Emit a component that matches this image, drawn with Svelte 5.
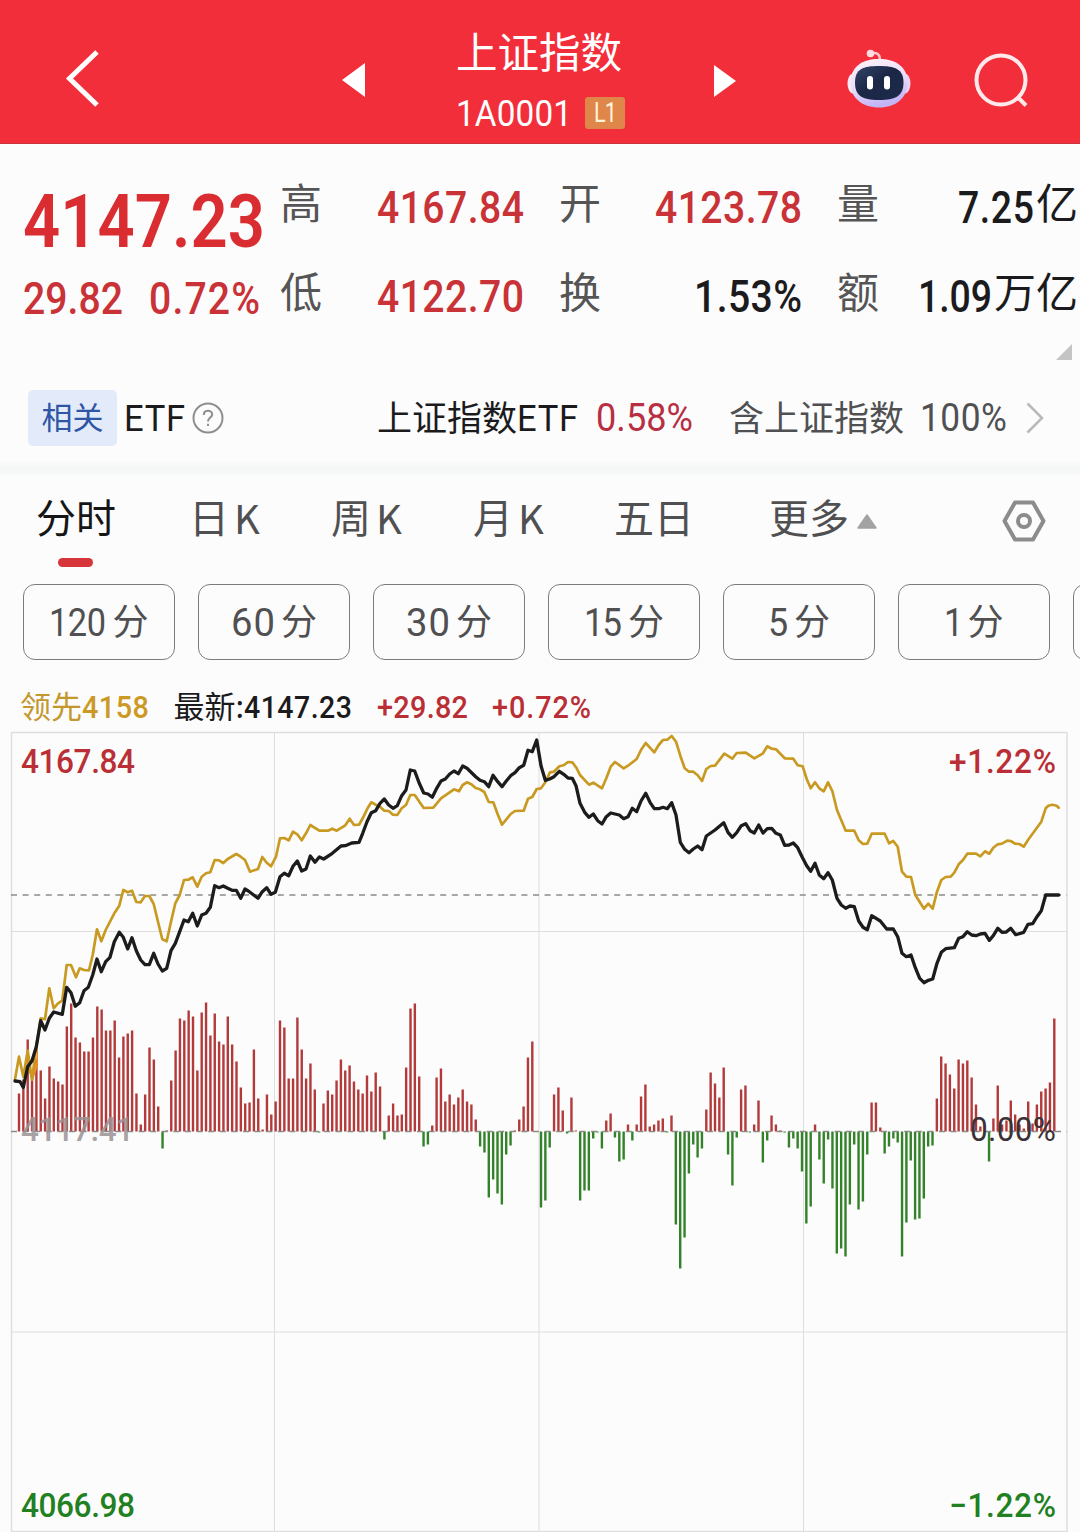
<script>
  const quotes = [
    { label: '高', num: '4167.84', w: 147, tone: 'up' },
    { label: '开', num: '4123.78', w: 147, tone: 'up' },
    { label: '量', num: '7.25', w: 76, unit: '亿', tone: 'ink' },
    { label: '低', num: '4122.70', w: 147, tone: 'up' },
    { label: '换', num: '1.53%', w: 108, tone: 'ink' },
    { label: '额', num: '1.09', w: 74, unit: '万亿', tone: 'ink' }
  ];

  const tabs = [
    { zh: '分时', active: true },
    { zh: '日', k: true },
    { zh: '周', k: true },
    { zh: '月', k: true },
    { zh: '五日' },
    { zh: '更多', more: true }
  ];

  const chips = [
    { n: '120', w: 57, sx: 0.88 },
    { n: '60', w: 44, sx: 0.98 },
    { n: '30', w: 44, sx: 0.98 },
    { n: '15', w: 38, sx: 0.9 },
    { n: '5', w: 20, sx: 0.92 },
    { n: '1', w: 17, sx: 0.88 }
  ];

  // Momentum bars, one per minute; positive above the zero line, negative below.
  const bars = [
    38, 52, 92, 52, 72, 61, 33, 65, 53, 50, 47, 105, 128, 94, 89, 80, 80, 94, 125, 122, 101, 101, 111, 74, 95, 98, 101, 38, 7, 37,
    84, 72, 25, -17, 1, 51, 81, 113, 111, 121, 115, 61, 119, 129, 96, 118, 90, 87, 115, 87, 70, 44, 28, 29, 82, 33, 2, 37, 17, 30, 111,
    104, 53, 53, 114, 82, 53, 68, 42, -1, 28, 41, 37, 51, 72, 61, 66, 50, 42, 38, 56, 40, 59, 45, -8, 16, 28, 16, 17, 64, 123,
    128, 55, -15, -13, 6, 54, 63, 30, 37, 27, 34, 42, 30, 27, 12, -15, -21, -66, -48, -62, -73, -23, -14, 1, 12, 25, 74, 90, 0,
    -76, -69, -16, 37, 44, 21, -2, 34, 1, -69, -59, -59, -7, -1, -17, 11, 18, -6, -30, -28, 7, -9, 7, 35, 47, 5, 7, 11, 13, -1,
    16, -93, -137, -106, -42, -13, -26, -17, 22, 59, 48, 34, 64, -23, -54, -6, 42, 46, -1, 7, 31, -31, -9, 16, 7, 1, -1, -16, -7, -17, -40, -92,
    -75, 7, -28, -52, -8, -57, -122, -117, -125, -73, -13, -78, -70, -23, 29, 29, 4, -22, -15, -7, -11, -125, -91, -29, -88, -87, -67, -15, -14, 33,
    75, 68, 57, 43, 72, 68, 71, 54, 27, 5, 1, -30, 13, 46, 7, 11, 31, 17, 7, 3, 30, 8, 27, 40, 43, 49, 113
  ];
  const zeroY = 1131.5;
  const barX = (i) => 19 + i * 4.35;

  // Each run holds an origin and its points in thirds of a pixel.
  const priceRuns = [
    [0, 880, '45,603 60,605 70,622 83,560 96,542 109,500 122,422 135,450 148,415 161,396 187,403 200,322 213,338 226,379 239,368 252,332 265,322 278,285 291,237 304,275 317,245 330,232 343,185 358,157 370,172 383,207 396,173 409,212 422,240 435,254 448,254 461,220 474,252 487,273 500,265 513,212 526,190 539,155 552,120 565,125 578,100 592,138 605,105 618,100 631,82'],
    [0, 725, '644,482 657,488 670,483 683,490 696,496 709,496 722,520 735,492 748,500 774,520 787,500 800,488 813,508 826,502'],
    [260, 725, '60,455 73,445 86,452 99,424 112,408 125,438 138,432 151,393 165,412 178,396 191,402 217,385 243,363 256,362 275,354 297,352 308,325 321,290 334,263 347,257 360,235 373,222 386,240 399,250 412,242 425,212 438,195 451,135 464,138 478,175 491,204 504,207 517,217 530,190 543,168 556,162 569,147 582,138 595,146 608,123 621,130 647,155 660,166 673,170 686,185 699,151 713,170 726,185 739,168 752,152 765,143 778,128 791,121 804,76 817,80'],
    [530, 725, '20,45 33,122 46,166 59,162 72,155 88,139 101,148 114,159 127,160 138,182 150,235 164,262 177,277 190,267 203,287 216,297 229,275 242,264 268,270 281,281 294,275 307,250 320,260 333,228 347,205 360,232 373,251 386,251 399,247 412,251 425,233 438,270 451,352 464,373 477,383 490,372 503,363 516,374 529,333 555,315 581,293 594,322 607,337 620,323 634,302 647,296 660,317 673,324 686,300 699,324 712,311 725,310 738,325 751,330 764,361 777,360 790,354 803,368'],
    [800, 725, '6,395 20,422 32,439 45,415 58,450 71,461 84,443 97,465 111,520 124,540 137,550 150,543 163,545 176,588 189,607 202,614 215,572 241,588 260,612 280,612 293,635 306,685 319,695 333,690 346,728 359,760 372,773 385,766 398,762 411,715 424,682 437,671 463,668 476,640 489,635 502,620 515,630 528,632 541,627 555,625 568,646 580,632 593,610 606,622 619,621 632,610 647,629 671,622 684,598 698,596 711,575 724,557 737,510 776,510']
  ];
  const leadRuns = [
    [0, 880, '45,598 57,530 70,590 83,512 96,600 109,500 122,415 135,418 148,325 161,385 174,370 187,362 200,255 213,255 228,292 239,265 252,270 267,271 278,225 291,148 304,184 317,150 343,100 358,77 370,30 383,37 396,32 409,66 422,67 435,48 448,48 461,72 474,125 487,178 500,184 513,125 526,70'],
    [0, 725, '539,510 552,465 565,464 578,457 592,485 605,455 618,445 631,442 644,405 657,406 670,414 683,402 709,387 722,395 735,405 750,440 774,432 787,396 800,413 813,424'],
    [260, 725, '48,395 60,340 73,339 86,346 99,320 112,328 125,346 138,325 151,300 178,317 204,317 217,311 230,317 256,301 269,281 282,300 297,299 308,280 321,253 334,232 347,239 360,245 373,257 386,258 399,269 412,270 425,250 438,240 451,210 464,210 491,249 520,248 543,220 582,193 597,199 608,180 621,172 634,178 647,189 660,193 673,201 686,231 700,232 713,268 726,299 752,267 765,258 791,257 804,221 817,216 830,192 843,190 856,172'],
    [530, 725, '60,142 72,140 88,124 101,121 114,111 127,112 140,130 150,150 177,179 190,173 216,190 229,160 242,125 255,111 281,130 294,122 320,102 333,75 347,54 373,82 386,60 399,45 412,44 425,33 438,50 451,92 464,130 477,140 490,140 503,151 516,168 529,132 542,123 555,122 583,86 607,101 620,84 647,83 673,100 699,85 712,64 725,71 738,73 764,100 790,101 803,121'],
    [800, 725, '8,124 20,162 32,190 45,172 58,190 71,199 84,172 97,198 111,255 137,317 163,317 176,346 189,357 202,356 215,326 254,326 267,355 280,348 293,365 306,440 319,455 333,456 346,510 372,551 385,536 398,551 411,500 424,465 437,456 452,455 463,443 476,418 489,405 502,386 528,386 541,394 555,379 568,386 580,368 593,358 606,356 622,347 632,348 645,356 658,357 671,365 684,345 724,290 737,250 745,242 757,239 770,242 776,248']
  ];
  const toPoints = (runs) =>
    runs
      .flatMap(([ox, oy, pts]) =>
        pts.split(' ').map((p) => {
          const [x, y] = p.split(',').map(Number);
          return `${(ox + x / 3).toFixed(1)},${(oy + y / 3).toFixed(1)}`;
        })
      )
      .join(' ');
  const price = toPoints(priceRuns);
  const lead = toPoints(leadRuns);

  const axis = [
    { t: '4167.84', x: 21, y: 773, w: 114, tone: 'crimson' },
    { t: '+1.22%', x: 949, y: 773, w: 107, tone: 'crimson' },
    { t: '4117.41', x: 21, y: 1141, w: 113, tone: 'mid' },
    { t: '0.00%', x: 970, y: 1141, w: 86, tone: 'zero' },
    { t: '4066.98', x: 21, y: 1517, w: 114, tone: 'green' },
    { t: '−1.22%', x: 949, y: 1517, w: 107, tone: 'green' }
  ];
</script>

<!-- Narrowed figures spaced out to a width; the box is as tall as the capitals. -->
{#snippet fit(text, w, size, cls, sx = 0.9)}
  <svg class="fit {cls}" width={w} height={Math.round(size * 0.711)}>
    <text y={Math.round(size * 0.711)} font-size={size} transform="scale({sx} 1)" textLength={w / sx}>{text}</text>
  </svg>
{/snippet}

<main>
  <header>
    <svg class="back" width="36" height="60" viewBox="0 0 36 60"><path d="M32 4 4.500 30.500 32 57" /></svg>
    <svg class="prev" width="24" height="36" viewBox="0 0 24 36"><path d="M0 18 23 1V35Z" /></svg>
    <div class="title">
      <h1>上证指数</h1>
      <div class="code">
        {@render fit('1A0001', 116, 37, 'white')}
        <span class="level">{@render fit('L1', 23, 27, 'cream', 0.8)}</span>
      </div>
    </div>
    <svg class="next" width="22" height="34" viewBox="0 0 22 34"><path d="M22 17 0 1V33Z" /></svg>
    <svg class="robot" width="64" height="62" viewBox="0 0 64 62">
      <defs>
        <linearGradient id="shell" x1="0" y1="0" x2="0.300" y2="1">
          <stop offset="0" stop-color="#fff3f8" /><stop offset="0.600" stop-color="#e9dcfa" /><stop offset="1" stop-color="#c3b4f6" />
        </linearGradient>
        <linearGradient id="visor" x1="0" y1="0" x2="1" y2="1">
          <stop offset="0" stop-color="#33456b" /><stop offset="0.450" stop-color="#1b2745" /><stop offset="1" stop-color="#1c2a4c" />
        </linearGradient>
      </defs>
      <path d="M24 5.500C30 4 33 6 33 12" fill="none" stroke="#ffc9d2" stroke-width="2.500" />
      <circle cx="23.500" cy="5.500" r="3.800" fill="#ffdbe2" />
      <ellipse cx="6" cy="35.500" rx="5.500" ry="10" fill="#fbeaf4" />
      <ellipse cx="58" cy="35.500" rx="5.500" ry="10" fill="#ecd2f0" />
      <path d="M32 11C49 11 60.500 19 60.500 34.500C60.500 50 49 59.500 32 59.500C15 59.500 3.500 50 3.500 34.500C3.500 19 15 11 32 11Z" fill="url(#shell)" />
      <path d="M32 18C48 18 56.500 21 56.500 34.500C56.500 47 50 52 32 52C14 52 8 47 8 34.500C8 21 16 18 32 18Z" fill="url(#visor)" />
      <rect x="20" y="28" width="6" height="13.500" rx="3" fill="#fff" />
      <rect x="37" y="28" width="6" height="13.500" rx="3" fill="#fff" />
    </svg>
    <svg class="search" width="56" height="56" viewBox="0 0 56 56"><circle cx="27" cy="27" r="24.500" /><path d="M43 43.500 52 52.500" /></svg>
  </header>

  <section class="quote">
    <div class="last">
      {@render fit('4147.23', 242, 74, 'up strong', 0.88)}
      <div class="change">
        {@render fit('29.82', 100, 43.5, 'up')}
        {@render fit('0.72%', 111, 43.5, 'up')}
      </div>
    </div>
    <div class="grid">
      {#each quotes as q}
        <div class="cell">
          <span class="label">{q.label}</span>
          <span class="value" class:mixed={q.unit}>{@render fit(q.num, q.w, 43.5, q.tone, q.unit ? 0.86 : 0.9)}{#if q.unit}<span class="unit">{q.unit}</span>{/if}</span>
        </div>
      {/each}
      <svg class="corner" width="16" height="16" viewBox="0 0 16 16"><path d="M16 0V16H0Z" /></svg>
    </div>
  </section>

  <section class="etf">
    <span class="tag"><span>相关</span></span>
    {@render fit('ETF', 61, 36, 'ink plain', 0.96)}
    <svg class="help" width="32" height="32" viewBox="0 0 32 32">
      <circle cx="16" cy="16" r="14.500" />
      <path d="M11.800 13C11.800 7.500 20.200 7.500 20.200 12.500C20.200 15.500 16 15.800 16 19.500" /><path d="M16 21.800V24" />
    </svg>
    <span class="name">上证指数</span>
    {@render fit('ETF', 61, 36, 'ink plain', 0.96)}
    <span class="pct">{@render fit('0.58%', 97, 38, 'rose plain', 0.95)}</span>
    <span class="holds">含上证指数</span>
    <span class="share">{@render fit('100%', 87, 38, 'grey plain', 0.93)}</span>
    <svg class="go" width="18" height="32" viewBox="0 0 18 32"><path d="M1.500 1.500 16 16 1.500 30.500" /></svg>
  </section>
  <div class="band"></div>

  <nav class="tabs">
    {#each tabs as t}
      <div class="tab" class:active={t.active}>
        <span>{t.zh}</span>
        {#if t.k}<span class="k">K</span>{/if}
        {#if t.more}<svg class="more" width="20" height="15" viewBox="0 0 20 15"><path d="M10 1 19 14H1Z" /></svg>{/if}
      </div>
    {/each}
    <svg class="gear" width="44" height="42" viewBox="0 0 44 42"><path d="M13 2.500H31L41.500 21 31 39.500H13L2.500 21Z" /><circle cx="22" cy="21" r="6" /></svg>
  </nav>

  <div class="chips">
    {#each chips as c}
      <button>{@render fit(c.n, c.w, 39, 'grey plain', c.sx)}<span>分</span></button>
    {/each}
    <button aria-label="更多周期"></button>
  </div>

  <div class="legend">
    <div class="gold"><span>领先</span>{@render fit('4158', 67, 31, 'goldfig', 0.93)}</div>
    <div><span>最新:</span>{@render fit('4147.23', 108, 31, 'ink', 0.92)}</div>
    {@render fit('+29.82', 91, 31, 'crimson', 0.93)}
    {@render fit('+0.72%', 99, 31, 'crimson', 0.93)}
  </div>

  <svg class="chart" width="1080" height="802" viewBox="0 730 1080 802">
    <g class="gridlines">
      <path d="M11 732.500H1067M11.500 732V1532M1067 732V1532M11 1531.500H1067" stroke-width="1.500" />
      <path d="M274.500 732V1532M539 732V1532M803.500 732V1532M11 931.500H1067M11 1332H1067" />
    </g>
    <path class="dash" d="M11 895H1067" />
    {#each bars as h, i}
      <rect class={h > 0 ? 'rise' : 'fall'} x={barX(i) - 1.2} y={h > 0 ? zeroY - h : zeroY} width="2.400" height={Math.abs(h)} />
    {/each}
    <path class="dash" d="M11 1131.500H1067" />
    <path class="open" d="M26.500 1068 28 1052 31 1078 36 1062 38 1040V1066L33 1080Z" />
    <polyline class="lead" points={lead} />
    <polyline class="price" points={price} />
    {#each axis as a}
      <text class={a.tone} font-size="34" transform="translate({a.x} {a.y}) scale(0.93 1)" textLength={a.w / 0.93}>{a.t}</text>
    {/each}
  </svg>
</main>

<style>
  :global(body) { margin: 0; background: #fcfcfc; }
  main {
    width: 1080px;
    height: 1532px;
    overflow: hidden;
    background: #fcfcfc;
    color: #1b1b1d;
    font-family: 'Noto Sans CJK SC', sans-serif;
    line-height: 1;
  }
  svg { display: block; flex: none; }
  span { white-space: nowrap; }

  .fit { overflow: visible; }
  text { font-family: Roboto, sans-serif; font-weight: 500; }
  .plain text { font-weight: 400; }
  .white text { fill: #fff; font-weight: 400; }
  .cream text { fill: #fff3d8; font-weight: 400; }
  .up text { fill: #c93237; }
  .strong text { fill: #da2d31; font-weight: 600; }
  .ink text { fill: #1b1b1d; }
  .grey text { fill: #505052; }
  .rose text { fill: #b82e42; }
  .goldfig text { fill: #cc9a24; }
  .crimson text, text.crimson { fill: #b92f35; }

  header {
    box-sizing: border-box;
    height: 144px;
    padding-left: 65px;
    display: flex;
    align-items: flex-start;
    background: #f22e3a;
    border-bottom: 1px solid #c93540;
  }
  .back { margin-top: 48px; }
  .back path { fill: none; stroke: #fff; stroke-width: 5; }
  .prev { margin: 62px 0 0 241px; }
  .prev path, .next path { fill: #fff; }
  .title { width: 170px; margin: 30px 0 0 90px; }
  h1 { margin: 0; font-size: 41.5px; font-weight: 400; color: #fff; white-space: nowrap; }
  .code { display: flex; align-items: center; gap: 13px; margin-top: 25px; height: 32px; }
  .level { display: flex; align-items: center; justify-content: center; width: 40px; height: 32px; border-radius: 3px; background: #df874b; }
  .next { margin: 64px 0 0 88px; }
  .robot { margin: 48px 0 0 111px; }
  .search { margin: 53px 0 0 63px; }
  .search circle, .search path { fill: none; stroke: #ffe9ea; stroke-width: 4; }

  .quote { display: flex; height: 246px; }
  .last { width: 257px; padding: 50px 0 0 23px; }
  .change { display: flex; gap: 26px; margin-top: 36px; }
  .grid {
    display: grid;
    grid-template-columns: 245px 244px 241px;
    column-gap: 34px;
    grid-template-rows: 42px 42px 16px;
    row-gap: 47px;
    padding-top: 40px;
  }
  .grid .corner { grid-column: 3; justify-self: end; margin: -18px 6px 0 0; }
  .corner path { fill: #c4c4c4; }
  .cell { display: flex; justify-content: space-between; align-items: center; font-size: 42px; }
  .label, .unit { margin-top: -8px; }
  .label { color: #555; }
  .value { display: flex; align-items: center; gap: 2px; margin-right: 1px; }
  .mixed { margin-right: 0; }
  .value .fit { margin-top: 4px; }

  .etf { display: flex; align-items: center; height: 56px; padding-left: 28px; font-size: 35px; }
  .tag { display: flex; align-items: center; justify-content: center; width: 89px; height: 56px; margin-right: 7px; border-radius: 5px; background: #e3ebfb; color: #2f55a4; font-size: 31px; }
  .tag span, .name, .holds { margin-top: -5px; }
  .help { margin-left: 7px; }
  .help circle, .help path { fill: none; stroke: #8e8e8e; stroke-width: 2; }
  .name { margin-left: 153px; }
  .pct { margin: -2px 36px 0 18px; }
  .holds { margin-right: 16px; color: #505052; }
  .share { margin-top: -2px; }
  .go { margin-left: 19px; }
  .go path { fill: none; stroke: #b9b9b9; stroke-width: 2.5; }
  .band { height: 14px; margin-top: 16px; background: linear-gradient(#fafbfb, #f5f7f7 40%, #f5f7f7 60%, #fafbfb); }

  .tabs {
    display: grid;
    grid-template-columns: 153px 142px 142px 141px 155px 234px auto;
    justify-content: start;
    height: 84px;
    padding: 24px 0 0 36px;
    font-size: 40px;
    color: #505052;
    box-sizing: border-box;
  }
  .tab { display: flex; align-items: center; height: 42px; }
  .tab span { margin-top: -10px; }
  .tab .k { margin-left: 5px; margin-top: -8px; }
  .active { position: relative; color: #161616; }
  .active::after { content: ''; position: absolute; left: 22px; top: 58px; width: 35px; height: 9px; border-radius: 5px; background: #d6353a; }
  .more { margin-left: 8px; }
  .more path { fill: #a3a3a3; stroke: #a3a3a3; stroke-width: 1.5; stroke-linejoin: round; }
  .gear { margin-left: -1px; }
  .gear path, .gear circle { fill: none; stroke: #8c8c8c; stroke-width: 4; stroke-linejoin: round; }

  .chips { display: flex; gap: 23px; margin-top: 24px; padding-left: 23px; }
  button {
    box-sizing: border-box;
    flex: none;
    display: flex;
    align-items: center;
    justify-content: center;
    gap: 6px;
    width: 152px;
    height: 76px;
    padding: 0;
    border: 1px solid #7c7c7c;
    border-radius: 12px;
    background: transparent;
    color: #505052;
    font: 36px/1 'Noto Sans CJK SC', sans-serif;
  }
  button span { margin-top: -7px; }

  .legend { display: flex; align-items: center; gap: 24.5px; height: 32px; margin: 31px 0 7px; padding-left: 20px; font-size: 31px; }
  .legend div { display: flex; align-items: center; }
  .legend span { margin-top: -6px; }
  .gold { color: #c2982f; }

  .gridlines path { fill: none; stroke: #dedede; }
  .dash { fill: none; stroke: #8b8b86; stroke-width: 1.6; stroke-dasharray: 6 5.6; }
  .rise { fill: #b23a3a; }
  .fall { fill: #33822a; }
  .open { fill: #ee8a22; }
  .lead, .price { fill: none; stroke-linejoin: round; stroke-linecap: round; }
  .lead { stroke: #c99a22; stroke-width: 2.7; }
  .price { stroke: #1c1c1c; stroke-width: 3.3; }
  .mid { fill: #9a9294; fill-opacity: 0.85; }
  .zero { fill: #3a3236; font-weight: 400; }
  .green { fill: #21801f; }
</style>
